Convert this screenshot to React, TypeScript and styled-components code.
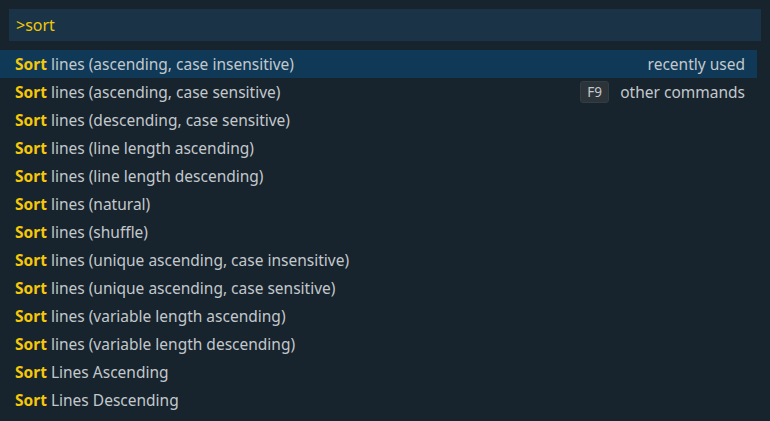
import React from "react";
import styled, { createGlobalStyle } from "styled-components";

const GlobalStyle = createGlobalStyle`
  html, body {
    margin: 0;
    padding: 0;
    background: #17232d;
  }
  * {
    box-sizing: border-box;
  }
`;

const items = [
  "lines (ascending, case insensitive)",
  "lines (ascending, case sensitive)",
  "lines (descending, case sensitive)",
  "lines (line length ascending)",
  "lines (line length descending)",
  "lines (natural)",
  "lines (shuffle)",
  "lines (unique ascending, case insensitive)",
  "lines (unique ascending, case sensitive)",
  "lines (variable length ascending)",
  "lines (variable length descending)",
  "Lines Ascending",
  "Lines Descending",
];

export default function App() {
  return (
    <>
      <GlobalStyle />
      <Palette>
        <InputWrap>
          <Input>&gt;sort</Input>
        </InputWrap>
        <List>
          {items.map((label, i) => (
            <Row key={label} $active={i === 0}>
              <Label>
                <Match>Sort</Match> {label}
              </Label>
              {i === 0 && <Meta>recently used</Meta>}
              {i === 1 && (
                <Meta>
                  <Key>F9</Key>
                  other commands
                </Meta>
              )}
            </Row>
          ))}
        </List>
      </Palette>
    </>
  );
}

const Palette = styled.div`
  width: 770px;
  height: 421px;
  overflow: hidden;
  background: #17232d;
  font-family: "Noto Sans", "Open Sans", sans-serif;
  font-size: 15.5px;
  color: #c3c8cc;
`;

const InputWrap = styled.div`
  padding: 9px 9px 9px 9px;
`;

const Input = styled.div`
  height: 32px;
  background: #1a3347;
  color: #f0c808;
  font-size: 16px;
  display: flex;
  align-items: center;
  padding-left: 7px;
`;

const List = styled.div`
  display: flex;
  flex-direction: column;
  width: 757px;
`;

const Row = styled.div<{ $active?: boolean }>`
  height: 28px;
  flex-shrink: 0;
  display: flex;
  align-items: center;
  justify-content: space-between;
  padding: 0 12px 0 15px;
  background: ${(p) => (p.$active ? "#0f3957" : "transparent")};
`;

const Label = styled.div`
  white-space: nowrap;
`;

const Match = styled.span`
  color: #f5c80a;
  font-weight: 700;
`;

const Meta = styled.div`
  display: flex;
  align-items: center;
  gap: 11px;
  white-space: nowrap;
`;

const Key = styled.span`
  display: inline-flex;
  align-items: center;
  justify-content: center;
  width: 29px;
  height: 22px;
  background: #2c3439;
  border: 1px solid #333d44;
  color: #c3c8cc;
  font-size: 13.5px;
  border-radius: 3px;
`;
